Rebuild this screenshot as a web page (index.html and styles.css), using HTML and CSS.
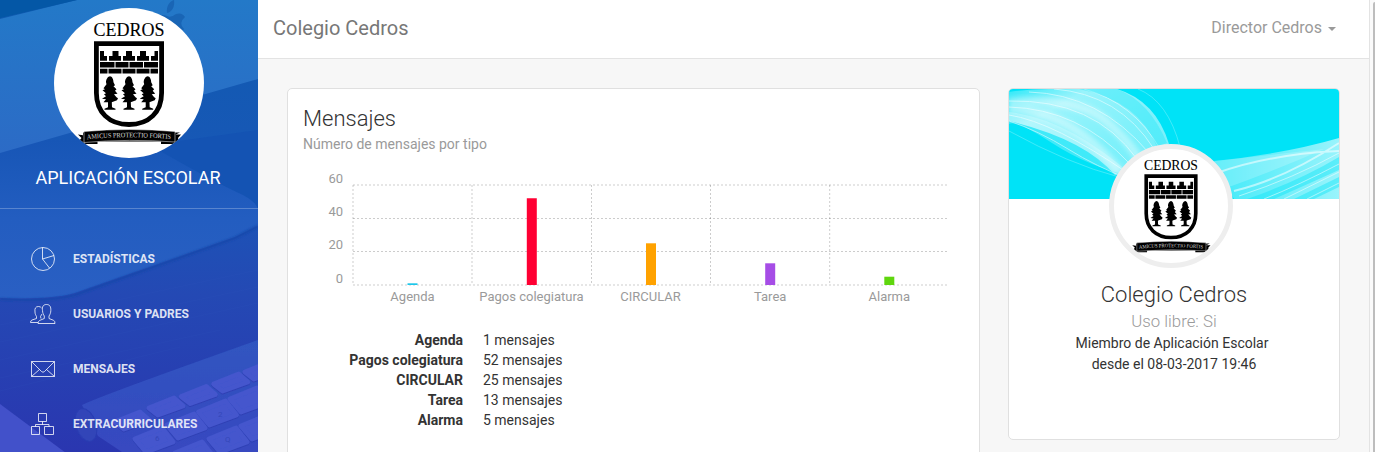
FILE: index.html
```html
<!DOCTYPE html>
<html lang="es">
<head>
<meta charset="utf-8">
<title>Colegio Cedros</title>
<link rel="stylesheet" href="styles.css">
</head>
<body>
<svg class="defs" width="0" height="0" aria-hidden="true">
  <defs>
    <path id="tree" d="M0 0C2 0 3.500 3 3.500 6L5 9 3.500 10 6.500 13 5 14.500 7.500 17.500 4 18 6.500 21 8 22 7 24 3 25.500 1.800 26 2 31 5.500 32.500V33.500H-5.500V32.500L-2 31V26L-6.500 26-4 23-8 22.500-4 20-6 18-4 17-7.500 14-5 13-6.500 12-3.500 8-4 6C-4 3-2 0 0 0Z"/>
    <symbol id="crest" viewBox="0 0 150 150">
      <text x="75" y="28" text-anchor="middle" textLength="71" lengthAdjust="spacingAndGlyphs" font-size="17.800" class="crest-name">CEDROS</text>
      <path d="M42.400 35.600H107.600V85C107.600 104 95 116.500 75 116.500S42.400 104 42.400 85Z" fill="#fff" stroke="#000" stroke-width="4.800"/>
      <path d="M46 43H50V48H53V52.700H46ZM55 52.700V48H58.500V43H64.500V48H67V52.700ZM69 52.700V48H72V43H78V48H81V52.700ZM83 52.700V48H86V43H92V48H95V52.700ZM97 52.700V48H100.500V43H104V52.700ZM46 54H60.500V59.500H46ZM61.500 54H74.500V59.500H61.500ZM75.500 54H89V59.500H75.500ZM90 54H104V59.500H90ZM46 60.700H53.500V65.500H46ZM54.500 60.700H67.500V65.500H54.500ZM68.500 60.700H81.500V65.500H68.500ZM82.500 60.700H95.500V65.500H82.500ZM96.500 60.700H104V65.500H96.500Z"/>
      <use href="#tree" x="56" y="68.300"/><use href="#tree" x="75" y="68.300"/><use href="#tree" x="93.700" y="68.300"/>
      <path d="M24 126.500L29 127.200V124.500L126 124.500 120.500 127V126.500L127 126.500 124 130 125 133 119 136H107V133.500H43.500V136H31L25 133 27.500 130Z" fill="#000"/>
      <path d="M30 123.500Q75 119.500 121 123.500V134Q75 130.500 30 134.500Z" stroke="#fff" stroke-width=".5"/>
      <path id="motto" d="M33 131.200Q75 127.300 119 131.200" fill="none"/>
      <text font-size="6.800" class="crest-motto"><textPath href="#motto" textLength="84" lengthAdjust="spacingAndGlyphs">AMICUS PROTECTIO FORTIS</textPath></text>
    </symbol>
  </defs>
</svg>
<div class="app">
  <aside class="sidebar">
    <svg class="scene" viewBox="0 0 258 452" preserveAspectRatio="none" aria-hidden="true">
      <defs>
        <linearGradient id="base" x2="0" y2="1"><stop offset="0" stop-color="#0f5bb0"/><stop offset=".4" stop-color="#1957b7"/><stop offset=".65" stop-color="#2449b4"/><stop offset="1" stop-color="#2a36b0"/></linearGradient>
        <linearGradient id="lid" x2="0" y2="1"><stop offset="0" stop-color="#2379c8"/><stop offset="1" stop-color="#2c6bc6"/></linearGradient>
        <linearGradient id="desk" x2="0" y2="1"><stop offset="0" stop-color="#1756b6"/><stop offset=".5" stop-color="#235dc0"/><stop offset="1" stop-color="#2a5fc3"/></linearGradient>
        <linearGradient id="board" x2="0" y2="1"><stop offset="0" stop-color="#2f55c0"/><stop offset="1" stop-color="#3847c0"/></linearGradient>
        <filter id="soft"><feGaussianBlur stdDeviation="1.200"/></filter>
        <filter id="slight"><feGaussianBlur stdDeviation=".5"/></filter>
        <path id="key" d="M-17 2L8-8 17 0-8 9Z"/>
        <path id="bigkey" d="M-19-1L8-12 19 2-8 12Z"/>
      </defs>
      <path d="M0 0H258V452H0Z" fill="url(#base)"/>
      <path d="M0 140H258V226L235 237 75 293Q50 300 0 298Z" fill="url(#desk)"/>
      <path d="M0 299Q50 302 75 295L235 238 258 226" fill="none" stroke="#1846a9" stroke-width="2" filter="url(#soft)"/>
      <path d="M150 145Q210 180 243 195 256 202 258 209V130Z" fill="#1453b3"/>
      <path d="M0 19L77 0H258V79L0 153Z" fill="url(#lid)"/>
      <path d="M0 0H77L0 18Z" fill="#0457a6"/>
      <path d="M167 13C166 6 170 1 174 0 175 7 172 12 167 13ZM167 16Q171 18 176 14 182 12 185 17 178 23 184 29L178 38 155 20Q159 13 167 16Z" fill="#1965b5"/>
      <g stroke="#3257bd" opacity=".15"><path d="M0 325L258 270M0 342L258 287M0 360L258 303M0 378L220 330M0 391L180 347"/></g>
      <g filter="url(#slight)">
        <path d="M82 405Q100 396 258 340V460H134L98 436Z" fill="url(#board)"/>
        <path d="M0 404L70 456H0Z" fill="#4251ca"/>
        <g class="keys">
          <use href="#key" x="132" y="420"/><use href="#key" x="166" y="406"/><use href="#key" x="198.300" y="394.500"/><use href="#key" x="230.700" y="382"/><use href="#key" x="262" y="370"/>
          <use href="#bigkey" x="154" y="440"/><use href="#bigkey" x="186" y="426"/><use href="#bigkey" x="217.500" y="413"/><use href="#bigkey" x="249" y="400"/>
          <use href="#bigkey" x="194" y="454"/><use href="#bigkey" x="228" y="440"/><use href="#bigkey" x="260" y="427"/>
        </g>
        <ellipse cx="86" cy="425" rx="10" ry="17" transform="rotate(-18 86 425)" fill="#3044b8" stroke="#2a3db2"/>
      </g>
      <g class="key-letters" font-size="8"><text x="218" y="417">2</text><text x="225" y="442">Q</text><text x="155" y="441">6</text></g>
    </svg>
    <div class="brand">
      <svg class="brand-logo"><use href="#crest"/></svg>
      <div class="brand-name">APLICACIÓN ESCOLAR</div>
    </div>
    <nav class="menu">
      <a class="item"><svg class="icon" viewBox="0 0 26 26"><circle cx="13" cy="13" r="11.500"/><path d="M12.500 1.500V13L19.500 22M12.500 13L24 9.500"/></svg><span>ESTADÍSTICAS</span></a>
      <a class="item"><svg class="icon" viewBox="0 0 26 26"><path d="M16.500 3.500C13 3.500 12 6 12.500 9.500 12.500 12 13.500 13.500 14.300 15V17.500L9.500 19.500Q8 20.500 8 22.500H25Q25 20 23.500 19.300L19 17.500V15C20 13.500 20.800 12 20.800 9.500 21 6 20 3.500 16.500 3.500ZM11.500 7Q10.500 5.500 8.500 5.500C5.500 5.500 4.500 7.500 5 11 5 13 6 14.500 6.500 15.500V17.500L2 19Q.5 19.500.5 21.500H8M11 17.500L10.500 15.500 12 13"/></svg><span>USUARIOS Y PADRES</span></a>
      <a class="item"><svg class="icon" viewBox="0 0 26 26"><path d="M1.500 5.500H24.500V20.500H1.500ZM1.500 5.500L11.500 15.500Q13 17 14.500 15.500L24.500 5.500M1.500 20.500L9.500 13.500M24.500 20.500L16.500 13.500"/></svg><span>MENSAJES</span></a>
      <a class="item"><svg class="icon" viewBox="0 0 26 26"><path d="M8.500 2.500H16.500V10.500H8.500ZM1.500 15.500H9.500V23.500H1.500ZM14.500 15.500H23.500V23.500H14.500ZM5.500 15.500V13.500H19V15.500M12.500 10.500V13.500"/></svg><span>EXTRACURRICULARES</span></a>
    </nav>
  </aside>
  <main class="main">
    <header class="topbar">
      <div class="title">Colegio Cedros</div>
      <div class="user">Director Cedros<i class="caret"></i></div>
    </header>
    <div class="content">
      <section class="card messages">
        <h4 class="card-title">Mensajes</h4>
        <p class="subtitle">Número de mensajes por tipo</p>
        <svg class="chart" width="660" height="140" viewBox="0 0 660 140">
          <g class="grid"><path d="M50 20H644M50 53.500H644M50 86.500H644M50 120H644M50 20V120M169 20V120M288.500 20V120M407.500 20V120M526.700 20V120"/></g>
          <path d="M109.500 120V118.300" stroke="#1dc7ea"/>
          <path d="M228.800 120V33.300" stroke="#ff0033"/>
          <path d="M348 120V78.300" stroke="#ffa200"/>
          <path d="M467.200 120V98.300" stroke="#a64de6"/>
          <path d="M586.300 120V111.700" stroke="#5fd60e"/>
          <g class="axis end"><text x="40" y="18">60</text><text x="40" y="51">40</text><text x="40" y="84">20</text><text x="40" y="118">0</text></g>
          <g class="axis mid"><text x="109.500" y="136">Agenda</text><text x="228.500" y="136">Pagos colegiatura</text><text x="347.500" y="136">CIRCULAR</text><text x="467.200" y="136">Tarea</text><text x="586.300" y="136">Alarma</text></g>
        </svg>
        <dl class="totals">
          <dt>Agenda</dt><dd>1 mensajes</dd>
          <dt>Pagos colegiatura</dt><dd>52 mensajes</dd>
          <dt>CIRCULAR</dt><dd>25 mensajes</dd>
          <dt>Tarea</dt><dd>13 mensajes</dd>
          <dt>Alarma</dt><dd>5 mensajes</dd>
        </dl>
      </section>
      <section class="card profile">
        <svg class="cover" viewBox="0 0 330 110" preserveAspectRatio="none" aria-hidden="true">
          <defs>
            <linearGradient id="wave" x2="1" y2="1"><stop offset="0" stop-color="#fff" stop-opacity=".2"/><stop offset=".25" stop-color="#fff" stop-opacity=".6"/><stop offset=".6" stop-color="#fff" stop-opacity=".5"/><stop offset="1" stop-color="#fff" stop-opacity=".45"/></linearGradient>
            <linearGradient id="wave2" x2="1"><stop offset="0" stop-color="#fff" stop-opacity=".25"/><stop offset="1" stop-color="#fff" stop-opacity=".6"/></linearGradient>
            <filter id="haze"><feGaussianBlur stdDeviation="2.500"/></filter>
            <filter id="fine"><feGaussianBlur stdDeviation=".6"/></filter>
          </defs>
          <path d="M0 0H330V110H0Z" fill="#00e3f7"/>
          <path d="M0 3Q20 0 40 0H108Q147 12 160 55L125 82 106 86Q75 50 0 32Z" fill="url(#wave)"/>
          <path d="M0 14Q70 8 97 32T132 75M0 20Q60 20 110 82" fill="none" stroke="#fff" stroke-width="9" opacity=".4" filter="url(#haze)"/>
          <path d="M0 23Q60 30 125 88Q80 78 43 54T0 35Z" fill="#fff" opacity=".25"/>
          <g fill="none" stroke="#fff" opacity=".5" filter="url(#fine)"><path d="M0 32Q30 42 59 60T120 90M0 26Q45 33 120 85M0 18Q70 20 120 74M0 12Q85 10 128 70M20 3Q90 5 140 64M45 0Q110 5 145 60M75 0Q125 14 151 60"/><path d="M129 0Q159 12 171 58M0 42Q60 75 110 88" opacity=".5"/></g>
          <path d="M70 0H108Q140 12 158 54L148 58Q130 12 70 0Z" fill="#00e3f7" opacity=".3"/>
          <path d="M205 72Q275 65 330 49V110H225Z" fill="url(#wave2)"/>
          <path d="M205 72Q270 65 315 60Q270 80 220 98Z" fill="#fff" opacity=".2"/>
          <g filter="url(#fine)">
            <path d="M225 102Q275 90 330 54M205 85Q260 65 330 62" fill="none" stroke="#fff" stroke-width="2" opacity=".55"/>
            <path d="M238 110Q290 92 330 68V81Q290 99 265 110ZM285 110L330 88V98L305 110Z" fill="#00e3f7" opacity=".4"/>
            <path d="M230 107Q285 89 330 64M255 110Q290 96 330 75M275 110L330 83M298 110L330 94" fill="none" stroke="#fff" opacity=".5"/>
          </g>
        </svg>
        <div class="avatar"><svg class="avatar-logo"><use href="#crest"/></svg></div>
        <h4 class="profile-name">Colegio Cedros</h4>
        <div class="profile-use">Uso libre: Si</div>
        <p class="profile-since"><span class="since-line">Miembro de Aplicación Escolar</span><br>desde el 08-03-2017 19:46</p>
      </section>
    </div>
  </main>
  <div class="scroll-track"><div class="scroll-thumb"></div></div>
</div>
</body>
</html>
```
FILE: styles.css
```css
* { box-sizing: border-box; }
body { margin: 0; overflow: hidden; font: 14px/20px Roboto, sans-serif; color: #333; background: #f7f7f7; }
h4, p, dl, dd { margin: 0; }
.defs { position: absolute; }
.app { display: flex; height: 452px; overflow: hidden; }

.sidebar { position: relative; width: 258px; flex: none; overflow: hidden; color: #fff; }
.scene { position: absolute; inset: 0; width: 258px; height: 452px; }
.keys { fill: #4456cd; stroke: #4456cd; stroke-width: 5; stroke-linejoin: round; filter: drop-shadow(0 1.5px .5px #2f40b4); }
.key-letters { fill: #3447b9; font-family: Roboto, sans-serif; }
.brand { position: relative; height: 209px; padding-top: 8px; border-bottom: 1px solid rgba(255, 255, 255, .25); display: flex; flex-direction: column; align-items: center; }
.brand-logo { width: 150px; height: 150px; border-radius: 50%; background: #fff; }
.brand-name { margin-top: 5px; font-size: 18px; line-height: 30px; padding-right: 2px; white-space: nowrap; }
.crest-name { font-family: "Liberation Serif", serif; stroke: #000; stroke-width: .1px; }
.crest-motto { font-family: "Liberation Serif", serif; fill: #ddd; }
.menu { position: relative; padding: 22px 0 0 30px; }
.item { display: flex; align-items: center; gap: 17px; height: 55px; font-size: 12px; font-weight: 700; color: rgba(255, 255, 255, .86); }
.icon { width: 26px; height: 26px; fill: none; stroke: rgba(255, 255, 255, .78); stroke-width: 1; }

.main { width: 1112px; border-right: 1px solid #e3e3e3; }
.topbar { display: flex; justify-content: space-between; height: 59px; padding: 0 33px 3px 15px; align-items: center; background: #fff; border-bottom: 1px solid #e3e3e3; }
.title { font-size: 20px; color: #777; }
.user { display: flex; align-items: center; gap: 6px; font-size: 16px; color: #9a9a9a; }
.caret { border: 4px solid transparent; border-top-color: #9a9a9a; border-bottom: 0; margin-top: 2px; }
.content { display: flex; align-items: flex-start; gap: 28px; padding: 29px 29px 0; }
.card { background: #fff; border: 1px solid #e0e0e0; border-radius: 5px; }
.messages { width: 693px; height: 420px; padding: 15px; }
.card-title { font-size: 22px; line-height: 30px; font-weight: 300; }
.subtitle { color: #9a9a9a; line-height: 21px; }
.chart { display: block; margin-top: 10px; fill: none; stroke-width: 10; }
.grid { stroke: rgba(0, 0, 0, .2); stroke-width: 1; stroke-dasharray: 2 2; }
.axis { fill: #9a9a9a; font-size: 13px; }
.end { text-anchor: end; }
.mid { text-anchor: middle; }
.totals { display: grid; grid-template-columns: 160px 1fr; column-gap: 20px; margin-top: 25px; }
.totals dt { font-weight: 700; text-align: right; }
.profile { width: 332px; height: 352px; overflow: hidden; display: flex; flex-direction: column; align-items: center; text-align: center; }
.cover { width: 330px; height: 110px; flex: none; }
.avatar { position: relative; width: 124px; height: 124px; flex: none; margin: -55px 6px 0 0; border: 5px solid #eee; border-radius: 50%; background: #fff; overflow: hidden; }
.avatar-logo { display: block; width: 114px; height: 114px; }
.profile-name { margin-top: 12px; font-size: 22px; line-height: 30px; font-weight: 300; }
.profile-use { font-size: 16.8px; line-height: 23px; font-weight: 300; color: #9a9a9a; }
.profile-since { line-height: 21px; }
.since-line { padding-right: 4px; }
.scroll-track { flex: 1; padding-top: 2px; display: flex; justify-content: flex-end; background: #fafafa; }
.scroll-thumb { width: 2px; height: 450px; background: #bdbdbd; border-radius: 2px 0 0 0; }
```
